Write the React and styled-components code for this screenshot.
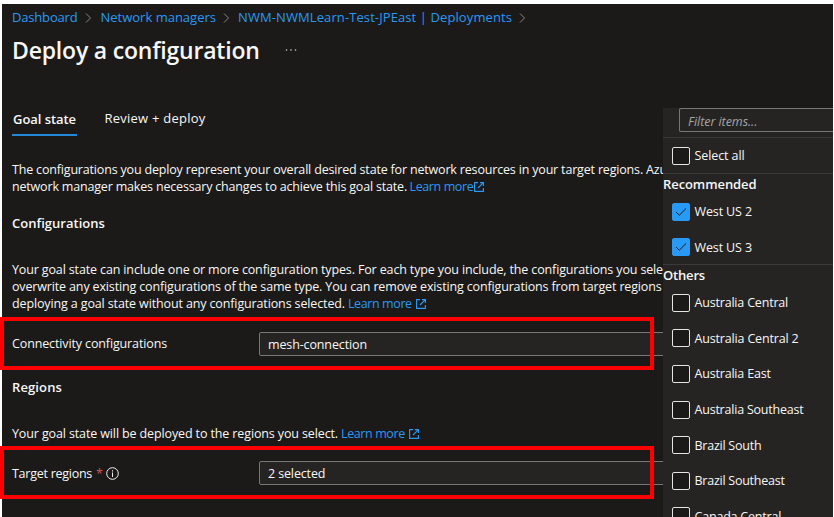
import React from "react";
import styled, { createGlobalStyle, css } from "styled-components";

const Global = createGlobalStyle`
  * { box-sizing: border-box; }
  body {
    margin: 0;
    background: #fff;
    color: #f8f7f6;
    font: 12.5px/17px "Open Sans", "Noto Sans", sans-serif;
    overflow: hidden;
  }
`;

const Page = styled.div`
  position: relative;
  width: 834px;
  height: 517px;
  padding: 4px 1px 0 2px;
  overflow: hidden;
`;

const Blade = styled.main`
  display: flex;
  flex-direction: column;
  height: 513px;
  overflow: visible;
  background: #1b1a19;
  white-space: nowrap;
`;

const Breadcrumbs = styled.nav`
  display: flex;
  align-items: center;
  height: 26px;
  padding-left: 10px;
  font-size: 13px;
`;

const Crumb = styled.a`
  width: ${(p) => p.$width}px;
  color: #2899f5;
  letter-spacing: ${(p) => p.$spacing}px;
`;

const CrumbArrow = styled.svg`
  width: 7px;
  height: 12px;
  margin: 1px 8.5px 0 7px;
  fill: none;
  stroke: #8a8886;
`;

const TitleBar = styled.header`
  display: flex;
  align-items: center;
  height: 40px;
  padding-left: 10px;
`;

const Title = styled.h1`
  width: 273px;
  margin: 0;
  font-size: 23px;
  font-weight: 600;
  letter-spacing: -0.2px;
  line-height: 32px;
`;

const MoreDots = styled.svg`
  width: 12px;
  height: 4px;
  fill: #d2d0ce;
`;

const Tabs = styled.div`
  display: flex;
  gap: 26.5px;
  height: 32px;
  margin: 34px 0 0 10px;
`;

const Tab = styled.div`
  height: 32px;
  padding: 6px 1px 0;
  font-size: 13px;
  line-height: 17px;
  letter-spacing: 0.235px;
  ${(p) =>
    p.$active &&
    css`
      width: 65px;
      padding-top: 7px;
      border-bottom: 2px solid #2488d8;
      font-weight: 600;
      letter-spacing: -0.055px;
    `}
`;

const Paragraph = styled.div`
  margin: ${(p) => p.$top}px 0 0 10px;
`;

const Line = styled.div`
  height: 17px;
  letter-spacing: ${(p) => p.$spacing}px;
`;

const Heading = styled.h2`
  margin: ${(p) => p.$top}px 0 0 10px;
  font-size: 13px;
  font-weight: 600;
  line-height: 17px;
  letter-spacing: ${(p) => p.$spacing}px;
`;

const Link = styled.a`
  margin-left: ${(p) => p.$gap}px;
  color: #2899f5;
  letter-spacing: -0.4px;
`;

const ExternalIcon = styled.svg`
  width: 10px;
  height: 10px;
  margin-left: ${(p) => p.$gap}px;
  vertical-align: -1px;
  fill: none;
  stroke: #2899f5;
  stroke-width: 1.15;
`;

const Field = styled.div`
  display: grid;
  grid-template-columns: 255px 410px;
  align-items: center;
  width: 654px;
  height: 53px;
  margin: ${(p) => p.$top}px 0 0 -2px;
  padding-left: 4px;
  outline: 4px solid #f00;
  outline-offset: -4px;
`;

const Label = styled.label`
  display: flex;
  align-items: center;
  padding: ${(p) => p.$drop || 0}px 0 0 8px;
  letter-spacing: ${(p) => p.$spacing}px;
`;

const Required = styled.span`
  margin-left: 4px;
  color: #d8505a;
`;

const InfoIcon = styled.svg`
  width: 13px;
  height: 13px;
  margin-left: 3.5px;
  fill: none;
  stroke: #f3f2f1;
`;

const Select = styled.div`
  height: 24px;
  padding: 3px 8px;
  border: 1px solid #797775;
  border-radius: 2px;
  background: #252423;
  letter-spacing: -0.13px;
  line-height: 17px;
`;

const Panel = styled.aside`
  position: absolute;
  top: 108px;
  left: 663px;
  width: 170px;
  height: 409px;
  overflow: hidden;
  background: #252423;
  white-space: nowrap;
`;

const FilterBox = styled.div`
  height: 24px;
  margin-left: 16px;
  padding: 4px 8px 0;
  border: 1px solid #797775;
  border-right: 0;
  border-radius: 2px 0 0 2px;
  background: #252423;
  color: #a8a5a2;
  font-style: italic;
  letter-spacing: -0.05px;
`;

const Group = styled.section`
  height: ${(p) => p.$height}px;
  margin-top: ${(p) => p.$top || 0}px;
  border-top: 1px solid #3b3a39;
`;

const GroupTitle = styled.h3`
  height: 20px;
  margin: 0;
  padding-top: 2px;
  font-size: 13px;
  font-weight: 600;
  line-height: 17px;
  letter-spacing: ${(p) => p.$spacing}px;
`;

const Option = styled.div`
  display: flex;
  align-items: center;
  gap: 4.5px;
  height: 35.6px;
  padding-left: 9px;
  letter-spacing: ${(p) => p.$spacing}px;
`;

const Box = styled.svg`
  flex: none;
  width: 18px;
  height: 18px;
  border: 1px solid ${(p) => (p.$checked ? "#2899f5" : "#e6e4e2")};
  border-radius: 2px;
  background: ${(p) => (p.$checked ? "#2899f5" : "#1b1a19")};
  fill: none;
  stroke: #1b1a19;
`;

function Arrow() {
  return (
    <CrumbArrow viewBox="0 0 7 12">
      <path d="M1 1.5 5.5 6 1 10.5" />
    </CrumbArrow>
  );
}

function LearnMore({ gap, iconGap = 4.5 }) {
  return (
    <Link $gap={gap}>
      Learn more
      <ExternalIcon $gap={iconGap} viewBox="0 0 10 10">
        <path d="M4 .6H.6v8.8h8.8V6M6 .6h3.4V4M9.4.6 4 6" />
      </ExternalIcon>
    </Link>
  );
}

function Check({ label, spacing, checked }) {
  return (
    <Option $spacing={spacing}>
      <Box $checked={checked} viewBox="0 0 16 16">
        {checked && <path d="M3.2 8.2 6.3 11.2 13 4.5" />}
      </Box>
      {label}
    </Option>
  );
}

const others = [
  ["Australia Central", -0.19],
  ["Australia Central 2", -0.165],
  ["Australia East", -0.19],
  ["Australia Southeast", -0.215],
  ["Brazil South", -0.24],
  ["Brazil Southeast", -0.25],
  ["Canada Central", -0.2],
];

export default function App() {
  return (
    <Page>
      <Global />
      <Blade>
        <Breadcrumbs>
          <Crumb $width={66} $spacing={-0.176}>Dashboard</Crumb>
          <Arrow />
          <Crumb $width={115} $spacing={0}>Network managers</Crumb>
          <Arrow />
          <Crumb $width={274} $spacing={0.097}>NWM-NWMLearn-Test-JPEast | Deployments</Crumb>
          <Arrow />
        </Breadcrumbs>
        <TitleBar>
          <Title>Deploy a configuration</Title>
          <MoreDots viewBox="0 0 12 4">
            <circle cx="1.5" cy="2" r=".8" />
            <circle cx="6" cy="2" r=".8" />
            <circle cx="10.5" cy="2" r=".8" />
          </MoreDots>
        </TitleBar>
        <Tabs>
          <Tab $active>Goal state</Tab>
          <Tab>Review + deploy</Tab>
        </Tabs>
        <Paragraph $top={25}>
          <Line $spacing={-0.176}>
            The configurations you deploy represent your overall desired state for network resources in your target regions. Azu
          </Line>
          <Line $spacing={-0.18}>
            network manager makes necessary changes to achieve this goal state.
            <LearnMore gap={2.5} iconGap={1} />
          </Line>
        </Paragraph>
        <Heading $top={20} $spacing={0.02}>Configurations</Heading>
        <Paragraph $top={29}>
          <Line $spacing={-0.139}>
            Your goal state can include one or more configuration types. For each type you include, the configurations you sele
          </Line>
          <Line $spacing={-0.15}>
            overwrite any existing configurations of the same type. You can remove existing configurations from target regions
          </Line>
          <Line $spacing={-0.129}>
            deploying a goal state without any configurations selected.
            <LearnMore gap={3} />
          </Line>
        </Paragraph>
        <Field $top={5}>
          <Label $spacing={-0.129}>Connectivity configurations</Label>
          <Select>mesh-connection</Select>
        </Field>
        <Heading $top={9} $spacing={0.122}>Regions</Heading>
        <Paragraph $top={29}>
          <Line $spacing={-0.125}>
            Your goal state will be deployed to the regions you select.
            <LearnMore gap={3} />
          </Line>
        </Paragraph>
        <Field $top={4}>
          <Label $spacing={-0.26} $drop={2}>
            Target regions
            <Required>*</Required>
            <InfoIcon viewBox="0 0 13 13">
              <circle cx="6.5" cy="6.5" r="5.8" />
              <path d="M6.5 5.5V10M6.5 3.2v1.3" />
            </InfoIcon>
          </Label>
          <Select>2 selected</Select>
        </Field>
      </Blade>
      <Panel>
        <FilterBox>Filter items...</FilterBox>
        <Group $height={36} $top={5}>
          <Check label="Select all" spacing={-0.1} />
        </Group>
        <Group $height={91}>
          <GroupTitle $spacing={-0.083}>Recommended</GroupTitle>
          <Check label="West US 2" spacing={-0.12} checked />
          <Check label="West US 3" spacing={-0.12} checked />
        </Group>
        <Group $height={300}>
          <GroupTitle $spacing={-0.177}>Others</GroupTitle>
          {others.map(([label, spacing]) => (
            <Check key={label} label={label} spacing={spacing} />
          ))}
        </Group>
      </Panel>
    </Page>
  );
}
